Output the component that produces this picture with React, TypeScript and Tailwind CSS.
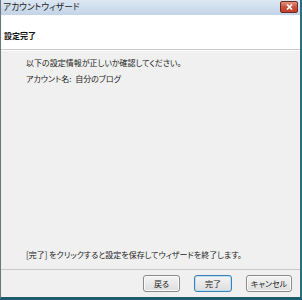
import React from 'react';

const jp = "font-['Meiryo_UI','Noto_Sans_CJK_JP',sans-serif] [font-feature-settings:'palt']";

function Button({ label, width, primary = false }: { label: string; width: string; primary?: boolean }) {
  return (
    <button
      className={`flex h-[17px] items-center justify-center rounded-[3px] border bg-gradient-to-b from-[#f4f4f4] to-[#dedede] text-[8px] text-[#222] ${width} ${
        primary ? 'border-[#3c7fb1] shadow-[inset_0_0_0_1px_#b9e0f5]' : 'border-[#8a8a8a] shadow-[inset_0_0_0_1px_#fbfbfb]'
      }`}
    >
      {label}
    </button>
  );
}

export default function App() {
  return (
    <div className={`flex h-[300px] w-[302px] flex-col border-b-[3px] border-l border-r-2 border-b-[#1d5d6b] border-l-[#6b7480] border-r-[#2d6e80] bg-[#f0f0f0] ${jp}`}>
      {/* Title bar */}
      <div className="flex h-[15px] items-center justify-between bg-gradient-to-b from-[#dce7f3] to-[#c3d4e7] pl-[2px] pr-[2px]">
        <span className="text-[8.7px] leading-none text-[#1e1e1e]">アカウントウィザード</span>
        <div className="mt-[-2px] flex h-[12px] w-[18px] items-center justify-center rounded-[2px] border border-[#6b2c22] bg-gradient-to-b from-[#e4917e] via-[#c7503c] to-[#c3422d]">
          <svg width="7" height="6" viewBox="0 0 7 6">
            <path d="M1 0.5 L6 5.5 M6 0.5 L1 5.5" stroke="#fff" strokeWidth="1.6" />
          </svg>
        </div>
      </div>

      {/* Header */}
      <div className="h-[35px] border-b border-[#c9c9c9] bg-white pl-[3px] pt-[5px]">
        <span className="text-[8px] font-bold text-[#111]">設定完了</span>
      </div>

      {/* Body */}
      <div className="flex flex-1 flex-col border-t border-white pl-[25px] pt-[6px] text-[8px] text-[#222]">
        <p className="leading-[11px]">以下の設定情報が正しいか確認してください。</p>
        <p className="mt-[5px] leading-[11px]">アカウント名:&nbsp;&nbsp;自分のブログ</p>
        <p className="mt-auto mb-[9px] leading-[11px]">[完了] をクリックすると設定を保存してウィザードを終了します。</p>
      </div>

      {/* Footer */}
      <div className="flex h-[28px] items-start justify-end border-t border-[#c9c9c9] pr-[8px] pt-[5px]">
        <Button label="戻る" width="w-[37px]" />
        <div className="ml-[14px]">
          <Button label="完了" width="w-[38px]" primary />
        </div>
        <div className="ml-[14px]">
          <Button label="キャンセル" width="w-[46px]" />
        </div>
      </div>
    </div>
  );
}
